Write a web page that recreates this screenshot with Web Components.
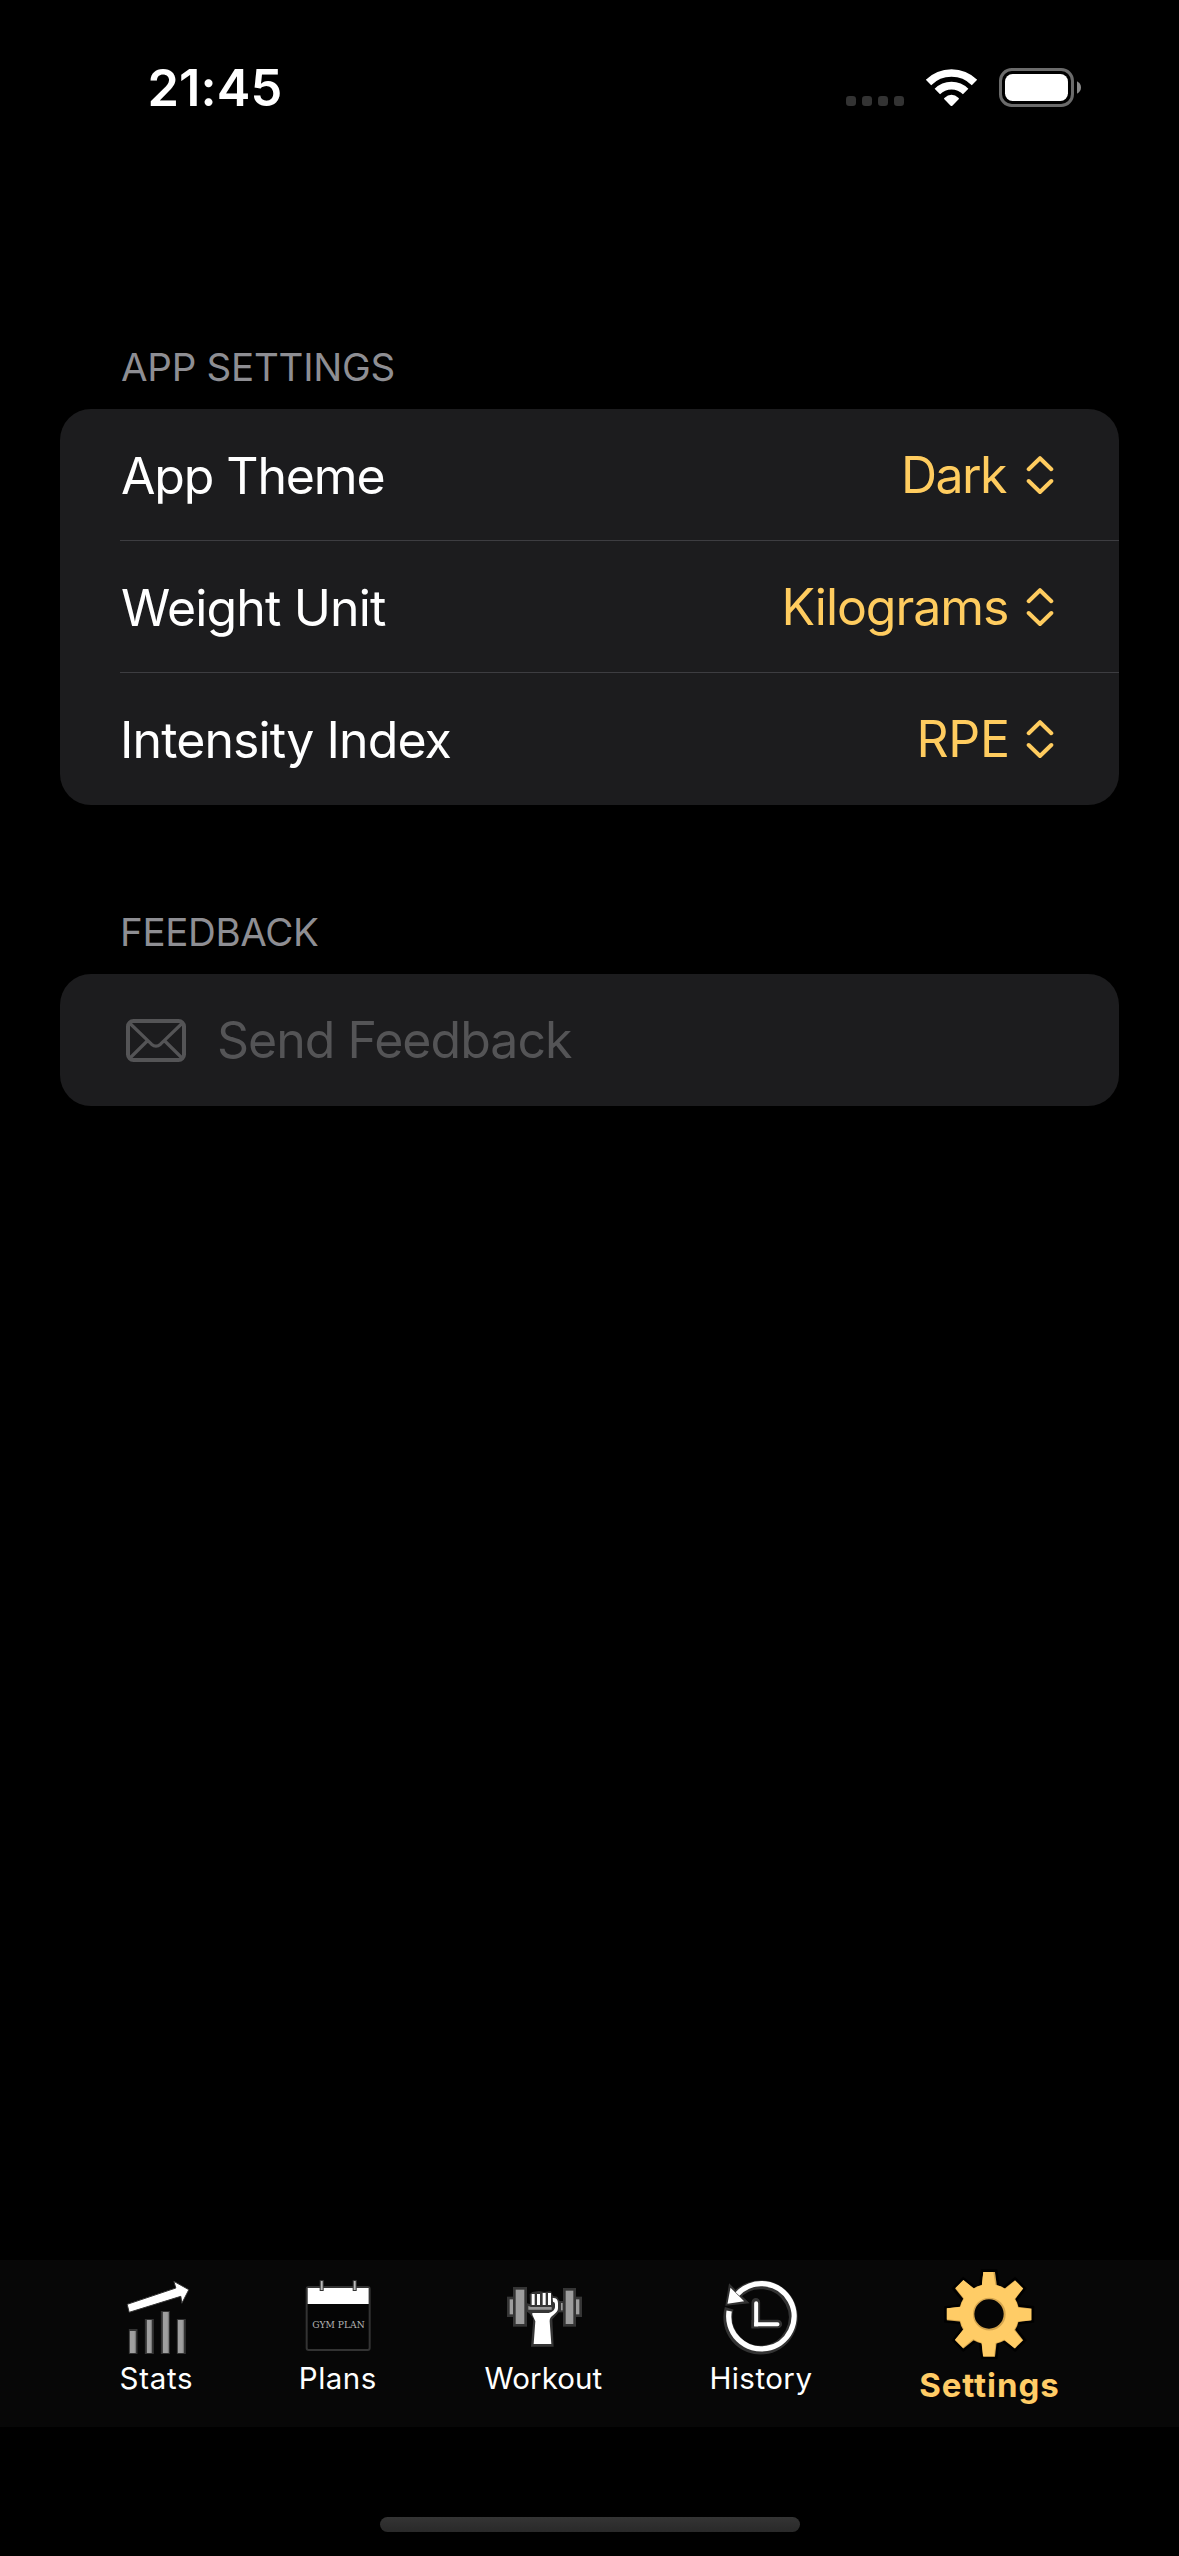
<!DOCTYPE html>
<html lang="en">
<head>
<meta charset="utf-8">
<title>Settings</title>
<style>
  html, body { margin: 0; background: #000; }
  body { width: 1179px; height: 2556px; overflow: hidden; font-family: Inter, "Liberation Sans", sans-serif; color: #fff; }
</style>
</head>
<body>
<settings-app></settings-app>
<script>
const define = (name, html, setup) => {
  const t = document.createElement('template');
  t.innerHTML = html.trim();
  customElements.define(name, class extends HTMLElement {
    constructor() {
      super();
      this.attachShadow({ mode: 'open' }).append(t.content.cloneNode(true));
    }
    connectedCallback() { if (setup) setup(this, this.shadowRoot); }
  });
};

// Text tracked so that its inked width equals the "ink" attribute
define('fit-text', `
  <style>
    :host { display: block; flex: none; }
    span { display: block; white-space: pre; }
  </style><span></span>`, (el, root) => {
  const span = root.querySelector('span');
  const text = el.getAttribute('text');
  const ink = +el.getAttribute('ink');
  const size = +el.getAttribute('size');
  const weight = el.getAttribute('weight') || 400;
  const ctx = document.createElement('canvas').getContext('2d');
  ctx.font = `${weight} ${size}px Inter, "Liberation Sans", sans-serif`;
  const m = ctx.measureText(text);
  span.textContent = text;
  el.style.width = ink + 'px';
  el.style.fontSize = size + 'px';
  el.style.fontWeight = weight;
  span.style.marginLeft = m.actualBoundingBoxLeft + 'px';
  span.style.letterSpacing = (ink - m.actualBoundingBoxLeft - m.actualBoundingBoxRight) / (text.length - 1) + 'px';
});

define('status-bar', `
  <style>
    :host { display: flex; justify-content: space-between; align-items: flex-start; height: 274px; box-sizing: border-box; padding: 58px 98px 0 150.5px; line-height: 60px; }
    svg { display: block; margin-top: 10px; }
  </style>
  <fit-text text="21:45" ink="130" size="50.500" weight="600"></fit-text>
  <svg width="235.33" height="39.33" viewBox="78 54 706 118">
    <g fill="#333">
      <rect x="78" y="138" width="30" height="30" rx="10"/><rect x="126" y="138" width="30" height="30" rx="10"/>
      <rect x="174" y="138" width="30" height="30" rx="10"/><rect x="222" y="138" width="30" height="30" rx="10"/>
    </g>
    <g fill="none" stroke="#fff" stroke-width="23">
      <path d="M325.5 97.500A97.500 97.500 0 0 1 463.500 97.500"/>
      <path d="M352 124.500A60 60 0 0 1 437 124.500"/>
    </g>
    <path d="M373 144Q394.500 124 416 144Q418 146 416 148L397 167Q394.500 169.500 392 167L373 148Q371 146 373 144Z" fill="#fff"/>
    <rect x="541.500" y="58.500" width="216" height="108" rx="34" fill="none" stroke="#6b6b6b" stroke-width="9"/>
    <rect x="555" y="72" width="189" height="81" rx="23" fill="#fff"/>
    <path d="M771 94Q783 100 783 112.500T771 131Z" fill="#8a8a8a"/>
  </svg>`);

define('settings-section', `
  <style>
    :host { display: block; padding: 0 60px; }
    header { display: flex; height: 65px; padding: 0 61px; line-height: 46px; color: #8e8e93; }
    .card { background: #1c1c1e; border-radius: 31px; overflow: hidden; }
  </style>
  <header><slot name="title"></slot></header>
  <div class="card"><slot></slot></div>`);

define('settings-row', `
  <style>
    :host { display: flex; flex-direction: column; height: 132px; }
    .row { flex: 1; display: flex; justify-content: space-between; padding: 0 65px 0 62px; line-height: 60px; }
    .label { padding-top: 37px; display: flex; }
    .value { padding-top: 36px; display: flex; gap: 19px; color: #ffcc5f; }
    svg { display: block; margin-top: 10px; }
    .line { height: 1px; margin-left: 60px; background: #3d3d41; }
    :host([last]) .line { display: none; }
  </style>
  <div class="row">
    <div class="label"><slot></slot></div>
    <div class="value"><slot name="value"></slot>
      <svg width="28" height="40" viewBox="0 0 28 40" fill="none" stroke="#ffcc5f" stroke-width="4" stroke-linecap="round" stroke-linejoin="round">
        <path d="M2.700 14.200L14 3.200L25.300 14.200M2.700 26L14 37L25.300 26"/>
      </svg>
    </div>
  </div>
  <div class="line"></div>`);

define('feedback-row', `
  <style>
    :host { display: flex; height: 132px; box-sizing: border-box; padding: 36px 66px 0; gap: 33px; line-height: 60px; color: #545456; }
    svg { display: block; margin-top: 9px; }
  </style>
  <svg width="60" height="43" viewBox="0 0 60 43" fill="none" stroke="#545456" stroke-width="4">
    <rect x="2" y="2" width="56" height="39" rx="5.500"/>
    <path stroke-width="3.200" d="M3.500 4L25.500 25.200Q30 29.200 34.500 25.200L56.500 4M3.500 39.500L21.700 21.500M56.500 39.500L38.300 21.500"/>
  </svg>
  <slot></slot>`);

define('tab-item', `
  <style>
    :host { display: flex; flex-direction: column; align-items: center; line-height: 34px; flex: none; }
    .icon { display: flex; justify-content: center; width: 0; height: 100px; }
    .text { padding-top: 1px; }
    :host([active]) { color: #ffcc66; }
    :host([active]) .text { padding-top: 8px; }
  </style>
  <div class="icon"><slot></slot></div>
  <div class="text"><slot name="label"></slot></div>`);

// Tab icons are drawn at three units per pixel
const icon = (name, center, art) => define('icon-' + name, `
  <style>:host { display: block; flex: none; } svg { display: block; }</style>
  <svg width="100" height="100" viewBox="${center - 150} 60 300 300">${art}</svg>`);

icon('stats', 198.5, `
  <g fill="#333"><path d="M117 267h26v75h-26zM165 237h27v105h-27zM213 213h27v129h-27zM261 237h27v105h-27z"/></g>
  <g fill="#9f9f9f"><path d="M120 273h18v66h-18zM171 240h15v99h-15zM219 216h18v123h-18zM264 240h18v99h-18z"/></g>
  <path fill="#777" d="M135 273h3v66h-3zM183 240h3v99h-3zM234 216h3v123h-3zM279 240h3v99h-3z"/>
  <path d="M112 193L258 144L252 124L297 149L276 190L273 169L118 217Z" fill="#fff" stroke="#333" stroke-width="3"/>`);

icon('plans', 175, `
  <rect x="81" y="141" width="189" height="189" rx="6" fill="#050505" stroke="#333" stroke-width="6"/>
  <path fill="#fff" d="M84 144h183v48h-183z"/>
  <g fill="#bbb" stroke="#333" stroke-width="3"><rect x="121.500" y="121.500" width="9" height="30"/><rect x="220.500" y="121.500" width="9" height="30"/></g>
  <text x="98" y="264" font-family="'DejaVu Serif', serif" font-size="28" fill="#b4b4b4" textLength="157" lengthAdjust="spacingAndGlyphs">GYM PLAN</text>`);

icon('workout', 219, `
  <g fill="#9d9d9d" stroke="#353535" stroke-width="6">
    <rect x="112" y="174" width="18" height="53" stroke-width="8"/><rect x="311" y="174" width="18" height="53" stroke-width="8"/>
    <rect x="130" y="145" width="34" height="111" stroke-width="8"/><rect x="280" y="148" width="31" height="108" stroke-width="8"/>
    <rect x="267" y="186" width="11" height="28"/>
  </g>
  <path d="M176 163L184 156L204 153L220 156L240 154L246 168L258 170L267 185L266 214L244 238L248 320H180L187 236L177 222L166 214L168 190L177 192Z" fill="#353535"/>
  <path d="M172 198L180 201H242V209H172Z" fill="#969696"/>
  <path d="M182 162h9v33h-9zM198 162h9v33h-9zM215 159h9v36h-9zM231 159h9v36h-9z" fill="#fff"/>
  <path d="M245 174Q261 173 261 190V205Q261 215 248 224Q235 232 236 244L241 312H188L193 244L184 224V219H233Q251 214 252 202V192Q252 186 246 185Z" fill="#fff"/>`);

icon('history', 212.5, `
  <g fill="none" stroke-linecap="butt">
    <path d="M117 205A98 98 0 1 0 137 168" stroke="#333" stroke-width="27"/>
    <path d="M118 134L108 195L174 188L148 164Z" fill="#333" stroke="#333" stroke-width="4"/>
    <path d="M197 187V252H263" stroke="#333" stroke-width="26" stroke-linecap="round"/><path d="M184 240h24v25h-24z" fill="#333"/>
    <path d="M117 213A98 98 0 1 0 142 162" stroke="#fff" stroke-width="16"/>
    <path d="M121 143L112 191L162 184Z" fill="#fff"/>
    <path d="M198 190V253H262" stroke="#fff" stroke-width="12" stroke-linecap="round"/><path d="M192 247h12v12h-12z" fill="#fff"/>
  </g>`);

const tooth = 'M243 140L248 96H283L289 140Z';
const teeth = [0, 45, 90, 135, 180, 225, 270, 315];
const gear = teeth.map(a => `<path d="${tooth}" transform="rotate(${a} 265.500 223)"/>`).join('');
icon('settings', 265, `
  <g fill="#000" stroke="#000" stroke-width="16"><circle cx="265.500" cy="223" r="84"/>${gear}</g>
  <g fill="#d5a54d"><circle cx="265.500" cy="223" r="91"/>${gear}</g>
  <g fill="#ffcc66"><circle cx="265.500" cy="222" r="89"/>
    <path d="M243 140L248 96H278L285 140Z"/>
    ${teeth.slice(1).map(a => `<path d="M245 140L249.500 96H283L287 140Z" transform="rotate(${a} 265 222.500)"/>`).join('')}</g>
  <circle cx="266" cy="222.500" r="49" fill="#d5a54d"/><circle cx="265" cy="222" r="44" fill="#050505"/>`);

define('tab-bar', `
  <style>
    :host { display: flex; gap: 108.8px; height: 167px; box-sizing: border-box; padding-left: 120.5px; background: #070707; }
  </style><slot></slot>`);

define('home-indicator', `
  <style>
    :host { display: flex; justify-content: center; align-items: flex-end; height: 129px; box-sizing: border-box; padding: 0 0 24px 1px; }
    div { width: 420px; height: 15px; border-radius: 8px; background: linear-gradient(#343434, #292929); }
  </style><div></div>`);

define('settings-app', `
  <style>
    :host { display: flex; flex-direction: column; width: 1179px; height: 2556px; background: #000; }
    main { flex: 1; padding-top: 70px; }
    .second { margin-top: 104px; }
  </style>
  <status-bar></status-bar>
  <main>
    <settings-section>
      <fit-text slot="title" text="APP SETTINGS" ink="272.5" size="38.5"></fit-text>
      <settings-row><fit-text text="App Theme" ink="261.500" size="50"></fit-text><fit-text slot="value" text="Dark" ink="102" size="50"></fit-text></settings-row>
      <settings-row><fit-text text="Weight Unit" ink="264" size="50"></fit-text><fit-text slot="value" text="Kilograms" ink="221.500" size="50"></fit-text></settings-row>
      <settings-row last><fit-text text="Intensity Index" ink="326.500" size="50" style="margin-left:2px"></fit-text><fit-text slot="value" text="RPE" ink="86.500" size="50"></fit-text></settings-row>
    </settings-section>
    <settings-section class="second">
      <fit-text slot="title" text="FEEDBACK" ink="195" size="38.5" style="margin-left:2px"></fit-text>
      <feedback-row><fit-text text="Send Feedback" ink="353" size="50"></fit-text></feedback-row>
    </settings-section>
  </main>
  <tab-bar>
    <tab-item><icon-stats></icon-stats><fit-text slot="label" text="Stats" ink="71.500" size="29.500"></fit-text></tab-item>
    <tab-item><icon-plans></icon-plans><fit-text slot="label" text="Plans" ink="75" size="29.500"></fit-text></tab-item>
    <tab-item><icon-workout></icon-workout><fit-text slot="label" text="Workout" ink="118" size="29.500"></fit-text></tab-item>
    <tab-item><icon-history></icon-history><fit-text slot="label" text="History" ink="100" size="29.500"></fit-text></tab-item>
    <tab-item active><icon-settings></icon-settings><fit-text slot="label" text="Settings" ink="138" size="33" weight="650"></fit-text></tab-item>
  </tab-bar>
  <home-indicator></home-indicator>`);
</script>
</body>
</html>
